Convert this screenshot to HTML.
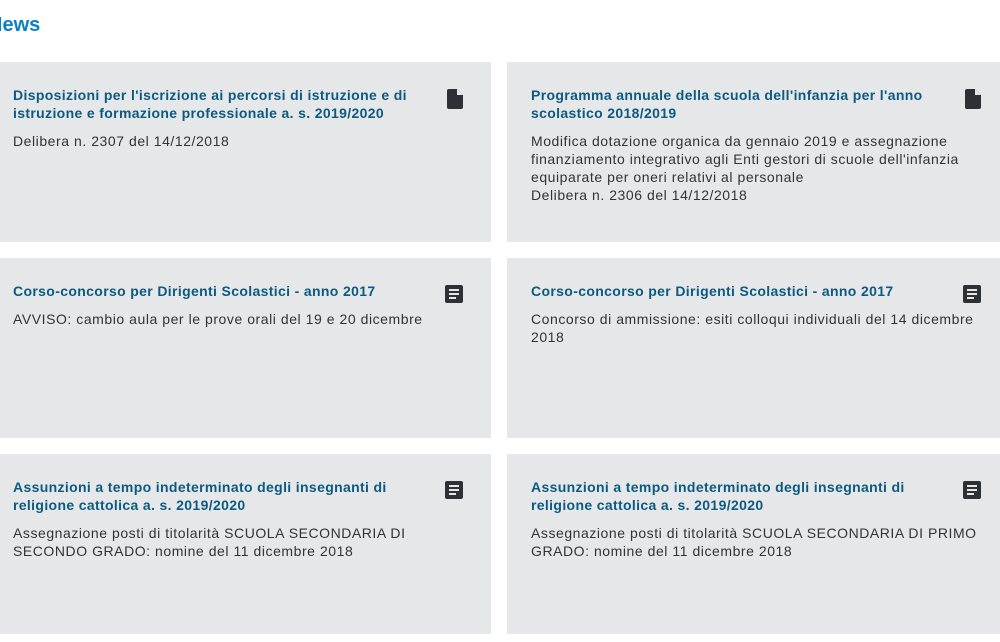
<!DOCTYPE html>
<html><head><meta charset="utf-8"><style>
body{margin:0;width:1000px;height:642px;overflow:hidden;background:#fff;font-family:"Liberation Sans",sans-serif;position:relative}
h2{position:absolute;left:-12px;top:14px;margin:0;font-size:20px;font-weight:bold;color:#0a7fc5}
.card{position:absolute;height:180px;background:#e6e7e9;box-sizing:border-box}
.l{left:-11px;width:502px;padding:24px 0 0 24px}
.r{left:507px;width:493px;padding:24px 0 0 24px}
.t{font-size:14px;font-weight:bold;color:#0b5a80;line-height:18px;letter-spacing:0.35px;margin:0 0 10px;white-space:nowrap}
.d{font-size:14px;color:#333;line-height:18px;letter-spacing:0.55px;white-space:nowrap}
.ic{position:absolute;top:27px;right:28px}
.r .ic{right:19px}
</style></head><body>
<h2>News</h2>

<div class="card l" style="top:62px"><div class="t">Disposizioni per l'iscrizione ai percorsi di istruzione e di<br>istruzione e formazione professionale a. s. 2019/2020</div><div class="d">Delibera n. 2307 del 14/12/2018</div>
<svg class="ic" width="16" height="20" viewBox="0 0 16 20"><path d="M2 0H10L16 6V18a2 2 0 0 1-2 2H2a2 2 0 0 1-2-2V2a2 2 0 0 1 2-2z" fill="#2d3035"/><path d="M10 0V6H16" fill="#e6e7e9"/></svg></div>

<div class="card r" style="top:62px"><div class="t">Programma annuale della scuola dell'infanzia per l'anno<br>scolastico 2018/2019</div><div class="d">Modifica dotazione organica da gennaio 2019 e assegnazione<br>finanziamento integrativo agli Enti gestori di scuole dell'infanzia<br>equiparate per oneri relativi al personale<br>Delibera n. 2306 del 14/12/2018</div>
<svg class="ic" width="16" height="20" viewBox="0 0 16 20"><path d="M2 0H10L16 6V18a2 2 0 0 1-2 2H2a2 2 0 0 1-2-2V2a2 2 0 0 1 2-2z" fill="#2d3035"/><path d="M10 0V6H16" fill="#e6e7e9"/></svg></div>

<div class="card l" style="top:258px"><div class="t">Corso-concorso per Dirigenti Scolastici - anno 2017</div><div class="d">AVVISO: cambio aula per le prove orali del 19 e 20 dicembre</div>
<svg class="ic" width="18" height="18" viewBox="0 0 18 18"><rect width="18" height="18" rx="2" fill="#2d3035"/><path d="M4 5H14M4 9H14M4 13H11" stroke="#e6e7e9" stroke-width="2"/></svg></div>

<div class="card r" style="top:258px"><div class="t">Corso-concorso per Dirigenti Scolastici - anno 2017</div><div class="d">Concorso di ammissione: esiti colloqui individuali del 14 dicembre<br>2018</div>
<svg class="ic" width="18" height="18" viewBox="0 0 18 18"><rect width="18" height="18" rx="2" fill="#2d3035"/><path d="M4 5H14M4 9H14M4 13H11" stroke="#e6e7e9" stroke-width="2"/></svg></div>

<div class="card l" style="top:454px"><div class="t">Assunzioni a tempo indeterminato degli insegnanti di<br>religione cattolica a. s. 2019/2020</div><div class="d">Assegnazione posti di titolarità SCUOLA SECONDARIA DI<br>SECONDO GRADO: nomine del 11 dicembre 2018</div>
<svg class="ic" width="18" height="18" viewBox="0 0 18 18"><rect width="18" height="18" rx="2" fill="#2d3035"/><path d="M4 5H14M4 9H14M4 13H11" stroke="#e6e7e9" stroke-width="2"/></svg></div>

<div class="card r" style="top:454px"><div class="t">Assunzioni a tempo indeterminato degli insegnanti di<br>religione cattolica a. s. 2019/2020</div><div class="d">Assegnazione posti di titolarità SCUOLA SECONDARIA DI PRIMO<br>GRADO: nomine del 11 dicembre 2018</div>
<svg class="ic" width="18" height="18" viewBox="0 0 18 18"><rect width="18" height="18" rx="2" fill="#2d3035"/><path d="M4 5H14M4 9H14M4 13H11" stroke="#e6e7e9" stroke-width="2"/></svg></div>
</body></html>
